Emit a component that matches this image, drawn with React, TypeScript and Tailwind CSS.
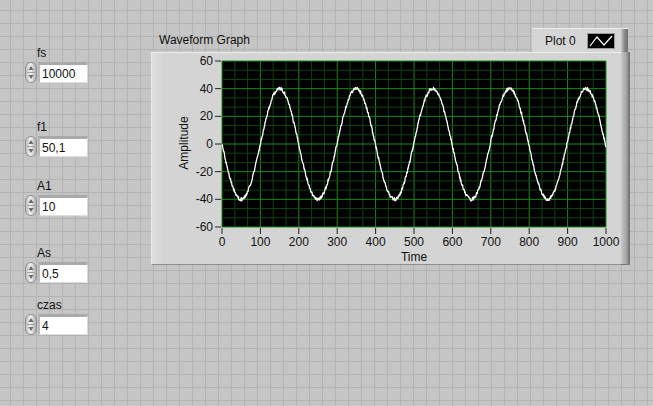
import React from "react";

const FONT = { fontFamily: '"Liberation Sans", Arial, sans-serif' };

// plot area, in coordinates of the graph panel's content box
const PX = 70;
const PY = 8;
const PW = 384;
const PH = 166;

function wavePoints() {
  let seed = 987654;
  const rnd = () => {
    seed = (seed * 1103515245 + 12345) & 0x7fffffff;
    return seed / 0x7fffffff;
  };
  const pts: string[] = [];
  for (let n = 0; n <= 1000; n++) {
    const v = -40 * Math.sin((2 * Math.PI * 50.1 * n) / 10000) + (rnd() - 0.5) * 2.4;
    const x = PX + (n / 1000) * PW;
    const y = PY + ((60 - v) / 120) * PH;
    pts.push(`${x.toFixed(2)},${y.toFixed(2)}`);
  }
  return pts.join(" ");
}

const Spinner = () => (
  <svg width="12" height="21" viewBox="0 0 12 21">
    <defs>
      <linearGradient id="spin" x1="0" x2="1" y1="0" y2="0">
        <stop offset="0" stopColor="#b9b9b9" />
        <stop offset="0.45" stopColor="#f2f2f2" />
        <stop offset="1" stopColor="#a9a9a9" />
      </linearGradient>
    </defs>
    <rect x="0.5" y="0.5" width="11" height="20" rx="5.5" fill="url(#spin)" stroke="#8f8f8f" />
    <line x1="2" y1="10.5" x2="10" y2="10.5" stroke="#a0a0a0" />
    <path d="M6 4 L8.5 8 L3.5 8 Z" fill="#6b6b6b" />
    <path d="M6 17 L8.5 13 L3.5 13 Z" fill="#6b6b6b" />
  </svg>
);

function Numeric({ label, value, className }: { label: string; value: string; className: string }) {
  return (
    <div className={`flex flex-col ${className}`}>
      <div className="ml-[12px] h-[14px] text-[12px] leading-[14px] text-[#111]">{label}</div>
      <div className="mt-[2px] flex items-center gap-[1px]">
        <Spinner />
        <div className="flex h-[21px] w-[50px] items-center border-t-[3px] border-l-[2px] border-r border-b border-t-[#a9a9a9] border-l-[#b9b9b9] border-r-[#d9d9d9] border-b-[#dedede] bg-white pl-[2px] text-[12px] text-[#111]">
          {value}
        </div>
      </div>
    </div>
  );
}

function Plot() {
  const lines: React.ReactNode[] = [];
  for (let i = 0; i <= 30; i++) {
    const x = PX + (i * PW) / 30;
    lines.push(
      <line key={`v${i}`} x1={x} y1={PY} x2={x} y2={PY + PH} stroke={i % 3 === 0 ? "#188a1c" : "#0d4412"} strokeWidth="1" />
    );
  }
  for (let i = 0; i <= 18; i++) {
    const y = PY + (i * PH) / 18;
    lines.push(
      <line key={`h${i}`} x1={PX} y1={y} x2={PX + PW} y2={y} stroke={i % 3 === 0 ? "#188a1c" : "#0d4412"} strokeWidth="1" />
    );
  }
  const yTicks = [60, 40, 20, 0, -20, -40, -60];
  const xTicks = [0, 100, 200, 300, 400, 500, 600, 700, 800, 900, 1000];
  return (
    <svg width="469" height="211" viewBox="0 0 469 211" style={FONT} className="block">
      <rect x={PX} y={PY} width={PW} height={PH} fill="#000" />
      {lines}
      <polyline points={wavePoints()} fill="none" stroke="#ffffff" strokeWidth="1.3" strokeLinejoin="round" />
      {yTicks.map((v, i) => {
        const y = PY + (i * PH) / 6;
        return (
          <g key={v}>
            <line x1={PX - 7} y1={y} x2={PX - 1} y2={y} stroke="#222" />
            <text x={PX - 9} y={y + 4} fontSize="12" textAnchor="end" fill="#111">
              {v}
            </text>
          </g>
        );
      })}
      {xTicks.map((v, i) => {
        const x = PX + (i * PW) / 10;
        return (
          <g key={v}>
            <line x1={x} y1={PY + PH + 1} x2={x} y2={PY + PH + 7} stroke="#222" />
            <text x={x} y={PY + PH + 19} fontSize="12" textAnchor="middle" fill="#111">
              {v}
            </text>
          </g>
        );
      })}
      <text x={PX + PW / 2} y={208} fontSize="12" textAnchor="middle" fill="#111">
        Time
      </text>
      <text x="33" y="90" fontSize="12" textAnchor="middle" dominantBaseline="middle" fill="#111" transform="rotate(-90 33 90)">
        Amplitude
      </text>
    </svg>
  );
}

export default function App() {
  return (
    <div
      style={FONT}
      className="flex h-[406px] w-[653px] overflow-hidden bg-[#c5c5c5] bg-[linear-gradient(to_right,#b3b3b3_1px,transparent_1px),linear-gradient(to_bottom,#b3b3b3_1px,transparent_1px)] bg-[size:13px_13px] bg-[position:10px_10px]"
    >
      <div className="flex w-[151px] shrink-0 flex-col pl-[25px]">
        <Numeric label="fs" value="10000" className="mt-[46px]" />
        <Numeric label="f1" value="50,1" className="mt-[37px]" />
        <Numeric label="A1" value="10" className="mt-[22px]" />
        <Numeric label="As" value="0,5" className="mt-[30px]" />
        <Numeric label="czas" value="4" className="mt-[15px]" />
      </div>

      <div className="flex w-[479px] shrink-0 flex-col pt-[28px]">
        <div className="flex h-[24px] items-center justify-between">
          <div className="pl-[8px] text-[12px] text-[#111]">Waveform Graph</div>
          <div className="mr-[2px] flex h-[24px] w-[96px] border-t border-t-[#ececec] bg-[#d5d5d5]">
            <div className="flex flex-1 items-center pl-[13px] text-[12px] text-[#111]">
              Plot 0
              <div className="ml-auto mr-[6px] h-[16px] w-[28px] border border-[#9a9a9a] bg-black">
                <svg width="26" height="14" viewBox="0 0 26 14" className="block">
                  <polyline points="2,12 9,3 16,11 24,2" fill="none" stroke="#fff" strokeWidth="1.2" />
                </svg>
              </div>
            </div>
            <div className="w-[7px] bg-[linear-gradient(to_right,#c6c6c6,#8a8a8a,#6e6e6e)]" />
          </div>
        </div>

        <div className="flex h-[213px]">
          <div className="flex-1 border-t border-l border-b border-t-[#eeeeee] border-l-[#e9e9e9] border-b-[#8e8e8e] bg-[linear-gradient(to_right,#dedede,#d4d4d4_12px,#d4d4d4)]">
            <Plot />
          </div>
          <div className="w-[9px] border-b border-b-[#7a7a7a] bg-[linear-gradient(to_right,#cacaca,#a2a2a2_60%,#6a6a6a)]" />
        </div>
      </div>
    </div>
  );
}
